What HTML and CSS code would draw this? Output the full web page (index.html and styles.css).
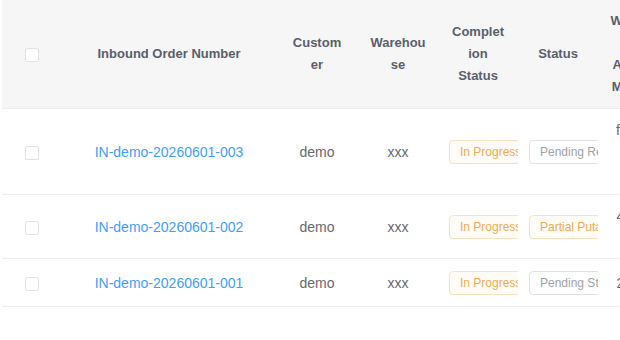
FILE: index.html
```html
<!DOCTYPE html>
<html lang="en">
<head>
<meta charset="utf-8">
<title>Inbound Orders</title>
<link rel="stylesheet" href="styles.css">
</head>
<body>
<div class="table-wrap">
  <table class="orders">
    <colgroup>
      <col class="w-check">
      <col class="w-number">
      <col class="w-customer">
      <col class="w-std">
      <col class="w-std">
      <col class="w-std">
      <col class="w-std">
    </colgroup>
    <thead>
      <tr>
        <th><span class="checkbox"></span></th>
        <th><div class="th-label">Inbound Order Number</div></th>
        <th><div class="th-label w54">Customer</div></th>
        <th><div class="th-label w58">Warehouse</div></th>
        <th><div class="th-label w54">Completion Status</div></th>
        <th><div class="th-label w58">Status</div></th>
        <th><div class="th-label w58">Warehouse Average Measure</div></th>
      </tr>
    </thead>
    <tbody>
      <tr>
        <td><span class="checkbox"></span></td>
        <td><a class="order-link" href="#">IN-demo-20260601-003</a></td>
        <td>demo</td>
        <td>xxx</td>
        <td class="tag-cell"><span class="tag tag-warning">In Progress</span></td>
        <td class="tag-cell"><span class="tag tag-info">Pending Receipt</span></td>
        <td><div class="multi">ffffffffffff</div><div class="multi">ab</div><div class="multi">-</div></td>
      </tr>
      <tr>
        <td><span class="checkbox"></span></td>
        <td><a class="order-link" href="#">IN-demo-20260601-002</a></td>
        <td>demo</td>
        <td>xxx</td>
        <td class="tag-cell"><span class="tag tag-warning">In Progress</span></td>
        <td class="tag-cell"><span class="tag tag-warning">Partial Putaway</span></td>
        <td><div class="multi">400.00</div><div class="multi">pcs</div></td>
      </tr>
      <tr>
        <td><span class="checkbox"></span></td>
        <td><a class="order-link" href="#">IN-demo-20260601-001</a></td>
        <td>demo</td>
        <td>xxx</td>
        <td class="tag-cell"><span class="tag tag-warning">In Progress</span></td>
        <td class="tag-cell"><span class="tag tag-info">Pending Storage</span></td>
        <td><div class="multi">200.00</div></td>
      </tr>
    </tbody>
  </table>
</div>
</body>
</html>
```
FILE: styles.css
```css
html, body {
  margin: 0;
  padding: 0;
  background: #ffffff;
}

body {
  font-family: "Liberation Sans", Arial, sans-serif;
  color: #666870;
}

.table-wrap {
  width: 620px;
  height: 340px;
  overflow: hidden;
  padding-left: 2px;
  box-sizing: border-box;
}

.orders {
  table-layout: fixed;
  border-collapse: collapse;
  width: 676px;
}

.w-check { width: 60px; }
.w-number { width: 214px; }
.w-customer { width: 82px; }
.w-std { width: 80px; }

.orders th {
  background: #f6f6f7;
  color: #5b5e6b;
  font-size: 13px;
  font-weight: 700;
  line-height: 22px;
  padding: 10px 0;
  text-align: center;
  vertical-align: middle;
  border-bottom: 1px solid #ebedf0;
}

.th-label {
  margin: 0 auto;
  overflow-wrap: anywhere;
}

.th-label.w54 { width: 54px; }
.th-label.w58 { width: 58px; }

.orders td {
  height: 48px;
  box-sizing: border-box;
  padding: 10px 11px 9px;
  font-size: 14px;
  line-height: 22px;
  text-align: center;
  vertical-align: middle;
  border-bottom: 1px solid #ebeef2;
  overflow: hidden;
  white-space: nowrap;
}

.orders td.tag-cell {
  text-align: left;
}

.checkbox {
  display: inline-block;
  width: 14px;
  height: 14px;
  box-sizing: border-box;
  border: 1px solid #e0e2e6;
  border-radius: 2px;
  background: #ffffff;
  vertical-align: middle;
}

.order-link {
  color: #409eff;
  text-decoration: none;
}

.tag {
  display: inline-block;
  height: 24px;
  line-height: 22px;
  padding: 0 10px;
  font-size: 12px;
  border: 1px solid;
  border-radius: 4px;
  box-sizing: border-box;
  white-space: nowrap;
  vertical-align: middle;
}

.tag-warning {
  color: #eeaa50;
  border-color: #f8e1bf;
  background: #fffcf7;
}

.tag-info {
  color: #a0a3a8;
  border-color: #dfe1e5;
  background: #ffffff;
}

.multi {
  line-height: 22px;
}
```
